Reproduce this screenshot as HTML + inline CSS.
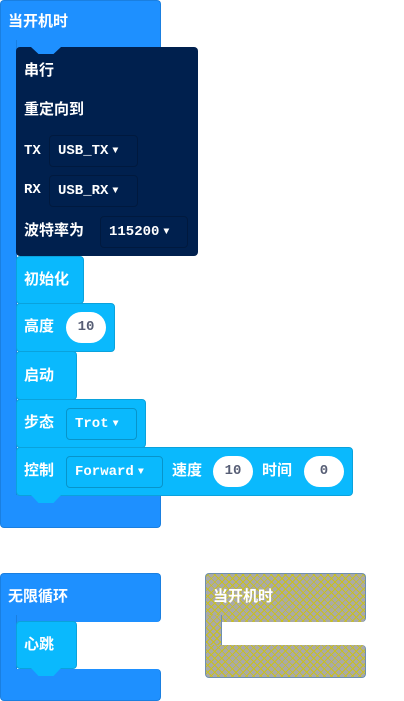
<!DOCTYPE html>
<html><head><meta charset="utf-8"><style>
body{margin:0;width:404px;height:701px;background:#fff;position:relative;overflow:hidden;font-family:"Liberation Sans","Noto Sans CJK SC",sans-serif;}
div{position:absolute;box-sizing:border-box;}
.b{background:#1e90ff;border:1px solid #1a7fe0;}
.c{background:#0ab9fd;border:1px solid #0aa2dc;border-radius:4px;}
.n{background:#00204e;border-radius:4px;}
.t{color:#fff;font-weight:bold;font-size:15px;line-height:20px;white-space:nowrap;}
.m{font-family:"Liberation Mono","DejaVu Sans Mono",monospace;font-size:14px;}
.dd{border:1px solid rgba(0,0,0,.2);border-radius:4px;color:#fff;font-weight:bold;font-family:"Liberation Mono","DejaVu Sans Mono",monospace;font-size:14px;line-height:30px;padding-left:8px;white-space:nowrap;}
.dd span{font-size:10px;vertical-align:1px;margin-left:4px}
.ov{background:#fff;border-radius:16px;color:#575e75;font-weight:bold;font-family:"Liberation Mono","DejaVu Sans Mono",monospace;font-size:14px;line-height:30px;text-align:center;}
.tab{width:30px;height:8px;clip-path:polygon(0 0,100% 0,75% 100%,25% 100%);}
.p{background-color:#a9a9a9;background-image:repeating-linear-gradient(45deg,transparent 0 4px,#c8c020 4px 5px),repeating-linear-gradient(-45deg,transparent 0 4px,#c8c020 4px 5px);border:1px solid #6e8fb0;}
</style></head><body>
<div class="b" style="left:0;top:0;width:161px;height:49px;border-radius:4px 4px 0 0;border-bottom:none"></div>
<div class="b" style="left:0;top:40px;width:17px;height:470px;border-top:none;border-bottom:none"></div>
<div class="b" style="left:0;top:495px;width:161px;height:33px;border-radius:0 0 4px 4px;border-top:none"></div>
<div class="t" style="left:8px;top:12px">当开机时</div>
<div class="n" style="left:16px;top:47px;width:182px;height:209px"></div>
<div style="left:31px;top:47px;width:30px;height:7px;background:#1e90ff;clip-path:polygon(0 0,100% 0,75% 100%,25% 100%)"></div>
<div class="t" style="left:24px;top:61px">串行</div>
<div class="t" style="left:24px;top:100px">重定向到</div>
<div class="t m" style="left:24px;top:141px">TX</div>
<div class="dd" style="left:49px;top:135px;width:89px;height:32px">USB_TX<span>▼</span></div>
<div class="t m" style="left:24px;top:180px">RX</div>
<div class="dd" style="left:49px;top:175px;width:89px;height:32px">USB_RX<span>▼</span></div>
<div class="t" style="left:24px;top:221px">波特率为</div>
<div class="dd" style="left:100px;top:216px;width:88px;height:32px">115200<span>▼</span></div>
<div class="tab" style="left:31px;top:255px;background:#00204e"></div>
<div class="c" style="left:16px;top:256px;width:68px;height:48px"></div>
<div class="t" style="left:24px;top:270px">初始化</div>
<div class="c" style="left:16px;top:303px;width:99px;height:49px"></div>
<div class="t" style="left:24px;top:317px">高度</div>
<div class="ov" style="left:66px;top:312px;width:40px;height:31px">10</div>
<div class="c" style="left:16px;top:351px;width:61px;height:49px"></div>
<div class="t" style="left:24px;top:366px">启动</div>
<div class="c" style="left:16px;top:399px;width:130px;height:49px"></div>
<div class="t" style="left:24px;top:413px">步态</div>
<div class="dd" style="left:66px;top:408px;width:71px;height:32px">Trot<span>▼</span></div>
<div class="c" style="left:16px;top:447px;width:337px;height:49px"></div>
<div class="t" style="left:24px;top:461px">控制</div>
<div class="dd" style="left:66px;top:456px;width:97px;height:32px">Forward<span>▼</span></div>
<div class="t" style="left:172px;top:461px">速度</div>
<div class="ov" style="left:213px;top:456px;width:40px;height:31px">10</div>
<div class="t" style="left:262px;top:461px">时间</div>
<div class="ov" style="left:304px;top:456px;width:40px;height:31px">0</div>
<div class="tab" style="left:31px;top:495px;background:#0ab9fd"></div>
<div class="b" style="left:0;top:573px;width:161px;height:49px;border-radius:4px 4px 4px 0;border-bottom:none"></div>
<div class="b" style="left:0;top:615px;width:17px;height:60px;border-top:none;border-bottom:none"></div>
<div class="b" style="left:0;top:669px;width:161px;height:32px;border-radius:0 4px 4px 4px;border-top:none"></div>
<div class="t" style="left:8px;top:587px">无限循环</div>
<div class="c" style="left:16px;top:621px;width:61px;height:48px"></div>
<div class="t" style="left:24px;top:635px">心跳</div>
<div class="tab" style="left:31px;top:668px;background:#0ab9fd"></div>
<div class="p" style="left:205px;top:573px;width:161px;height:49px;border-radius:4px 4px 4px 0;border-bottom:none"></div>
<div class="p" style="left:205px;top:615px;width:17px;height:40px;border-top:none;border-bottom:none"></div>
<div class="p" style="left:205px;top:645px;width:161px;height:33px;border-radius:0 4px 4px 4px;border-top:none"></div>
<div class="t" style="left:213px;top:587px">当开机时</div>
</body></html>
